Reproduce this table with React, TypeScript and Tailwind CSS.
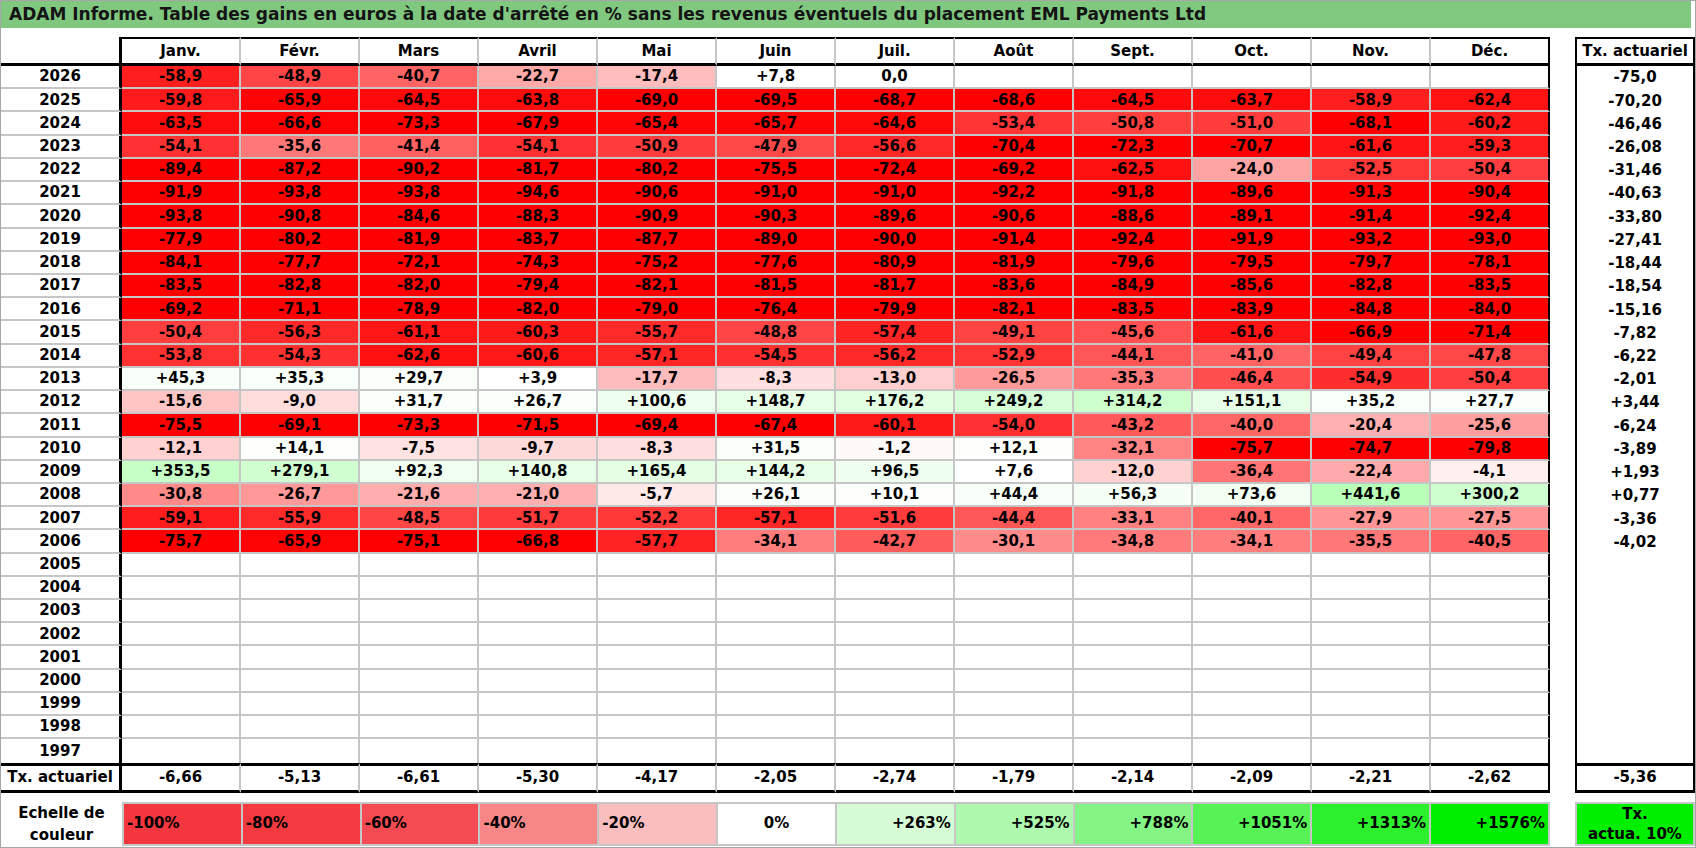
import React from 'react';

const months = ['Janv.', 'Févr.', 'Mars', 'Avril', 'Mai', 'Juin', 'Juil.', 'Août', 'Sept.', 'Oct.', 'Nov.', 'Déc.'];

// year, 12 monthly values (blank = ''), tx actuariel
const rows: [string, string[], string][] = [
  ['2026', ['-58,9', '-48,9', '-40,7', '-22,7', '-17,4', '+7,8', '0,0', '', '', '', '', ''], '-75,0'],
  ['2025', ['-59,8', '-65,9', '-64,5', '-63,8', '-69,0', '-69,5', '-68,7', '-68,6', '-64,5', '-63,7', '-58,9', '-62,4'], '-70,20'],
  ['2024', ['-63,5', '-66,6', '-73,3', '-67,9', '-65,4', '-65,7', '-64,6', '-53,4', '-50,8', '-51,0', '-68,1', '-60,2'], '-46,46'],
  ['2023', ['-54,1', '-35,6', '-41,4', '-54,1', '-50,9', '-47,9', '-56,6', '-70,4', '-72,3', '-70,7', '-61,6', '-59,3'], '-26,08'],
  ['2022', ['-89,4', '-87,2', '-90,2', '-81,7', '-80,2', '-75,5', '-72,4', '-69,2', '-62,5', '-24,0', '-52,5', '-50,4'], '-31,46'],
  ['2021', ['-91,9', '-93,8', '-93,8', '-94,6', '-90,6', '-91,0', '-91,0', '-92,2', '-91,8', '-89,6', '-91,3', '-90,4'], '-40,63'],
  ['2020', ['-93,8', '-90,8', '-84,6', '-88,3', '-90,9', '-90,3', '-89,6', '-90,6', '-88,6', '-89,1', '-91,4', '-92,4'], '-33,80'],
  ['2019', ['-77,9', '-80,2', '-81,9', '-83,7', '-87,7', '-89,0', '-90,0', '-91,4', '-92,4', '-91,9', '-93,2', '-93,0'], '-27,41'],
  ['2018', ['-84,1', '-77,7', '-72,1', '-74,3', '-75,2', '-77,6', '-80,9', '-81,9', '-79,6', '-79,5', '-79,7', '-78,1'], '-18,44'],
  ['2017', ['-83,5', '-82,8', '-82,0', '-79,4', '-82,1', '-81,5', '-81,7', '-83,6', '-84,9', '-85,6', '-82,8', '-83,5'], '-18,54'],
  ['2016', ['-69,2', '-71,1', '-78,9', '-82,0', '-79,0', '-76,4', '-79,9', '-82,1', '-83,5', '-83,9', '-84,8', '-84,0'], '-15,16'],
  ['2015', ['-50,4', '-56,3', '-61,1', '-60,3', '-55,7', '-48,8', '-57,4', '-49,1', '-45,6', '-61,6', '-66,9', '-71,4'], '-7,82'],
  ['2014', ['-53,8', '-54,3', '-62,6', '-60,6', '-57,1', '-54,5', '-56,2', '-52,9', '-44,1', '-41,0', '-49,4', '-47,8'], '-6,22'],
  ['2013', ['+45,3', '+35,3', '+29,7', '+3,9', '-17,7', '-8,3', '-13,0', '-26,5', '-35,3', '-46,4', '-54,9', '-50,4'], '-2,01'],
  ['2012', ['-15,6', '-9,0', '+31,7', '+26,7', '+100,6', '+148,7', '+176,2', '+249,2', '+314,2', '+151,1', '+35,2', '+27,7'], '+3,44'],
  ['2011', ['-75,5', '-69,1', '-73,3', '-71,5', '-69,4', '-67,4', '-60,1', '-54,0', '-43,2', '-40,0', '-20,4', '-25,6'], '-6,24'],
  ['2010', ['-12,1', '+14,1', '-7,5', '-9,7', '-8,3', '+31,5', '-1,2', '+12,1', '-32,1', '-75,7', '-74,7', '-79,8'], '-3,89'],
  ['2009', ['+353,5', '+279,1', '+92,3', '+140,8', '+165,4', '+144,2', '+96,5', '+7,6', '-12,0', '-36,4', '-22,4', '-4,1'], '+1,93'],
  ['2008', ['-30,8', '-26,7', '-21,6', '-21,0', '-5,7', '+26,1', '+10,1', '+44,4', '+56,3', '+73,6', '+441,6', '+300,2'], '+0,77'],
  ['2007', ['-59,1', '-55,9', '-48,5', '-51,7', '-52,2', '-57,1', '-51,6', '-44,4', '-33,1', '-40,1', '-27,9', '-27,5'], '-3,36'],
  ['2006', ['-75,7', '-65,9', '-75,1', '-66,8', '-57,7', '-34,1', '-42,7', '-30,1', '-34,8', '-34,1', '-35,5', '-40,5'], '-4,02'],
  ...['2005', '2004', '2003', '2002', '2001', '2000', '1999', '1998', '1997'].map(
    (y) => [y, Array(12).fill(''), ''] as [string, string[], string]
  ),
];

const totals = ['-6,66', '-5,13', '-6,61', '-5,30', '-4,17', '-2,05', '-2,74', '-1,79', '-2,14', '-2,09', '-2,21', '-2,62'];

const legend = [
  { label: '-100%', bg: 'bg-[#f4373e]', align: 'justify-start pl-[3px]' },
  { label: '-80%', bg: 'bg-[#f4393f]', align: 'justify-start pl-[3px]' },
  { label: '-60%', bg: 'bg-[#f44a51]', align: 'justify-start pl-[3px]' },
  { label: '-40%', bg: 'bg-[#f78686]', align: 'justify-start pl-[3px]' },
  { label: '-20%', bg: 'bg-[#fbbebe]', align: 'justify-start pl-[3px]' },
  { label: '0%', bg: 'bg-white', align: 'justify-center' },
  { label: '+263%', bg: 'bg-[#d6fcd6]', align: 'justify-end pr-[3px]' },
  { label: '+525%', bg: 'bg-[#aef9ae]', align: 'justify-end pr-[3px]' },
  { label: '+788%', bg: 'bg-[#84f584]', align: 'justify-end pr-[3px]' },
  { label: '+1051%', bg: 'bg-[#56f256]', align: 'justify-end pr-[3px]' },
  { label: '+1313%', bg: 'bg-[#2cf02c]', align: 'justify-end pr-[3px]' },
  { label: '+1576%', bg: 'bg-[#00ee00]', align: 'justify-end pr-[3px]' },
];

// colour scale of the sheet: white at 0, full red near -67%, full green at +1576%
function cellBg(s: string) {
  if (!s) return '#ffffff';
  const v = parseFloat(s.replace(',', '.'));
  if (v < 0) {
    const c = Math.round(255 * (1 - Math.min(1, -v / 67)));
    return `rgb(255,${c},${c})`;
  }
  const c = Math.round(255 * (1 - Math.min(1, v / 1576)));
  return `rgb(${c},255,${c})`;
}

export default function App() {
  return (
    <div className="w-[1696px] h-[848px] bg-white border border-[#a6a6a6] text-black font-bold overflow-hidden font-['DejaVu_Sans',sans-serif]">
      {/* Title */}
      <div className="h-[27px] mr-[4px] bg-[#80c880] pl-[8px] flex items-center text-[17px] text-[#141414]">
        ADAM Informe. Table des gains en euros à la date d'arrêté en % sans les revenus éventuels du placement EML Payments Ltd
      </div>

      <div className="flex mt-[9px] text-[15px]">
        {/* Main table */}
        <div className="w-[1549px]">
          <div className="flex h-[29px]">
            <div className="w-[121px] border-r-[3px] border-b-[3px] border-black" />
            {months.map((m, i) => (
              <div
                key={m}
                className={`w-[119px] flex items-center justify-center border-t-2 border-b-[3px] border-r-2 border-t-black border-b-black ${i === 11 ? 'border-r-black' : 'border-r-[#c6c6c6]'}`}
              >
                {m}
              </div>
            ))}
          </div>

          {rows.map(([year, vals], ri) => {
            const last = ri === rows.length - 1;
            return (
              <div key={year} className="flex h-[23.23px]">
                <div className={`w-[121px] flex items-center justify-center border-r-[3px] border-r-black border-b-[#c6c6c6] ${last ? '' : 'border-b-2'}`}>
                  {year}
                </div>
                {vals.map((v, i) => (
                  <div
                    key={i}
                    style={{ backgroundColor: cellBg(v) }}
                    className={`w-[119px] flex items-center justify-center border-r-2 border-b-[#c6c6c6] ${last ? '' : 'border-b-2'} ${i === 11 ? 'border-r-black' : 'border-r-[#c6c6c6]'}`}
                  >
                    {v}
                  </div>
                ))}
              </div>
            );
          })}

          <div className="flex h-[30px]">
            <div className="w-[121px] flex items-center justify-center border-t-[3px] border-b-[3px] border-r-[3px] border-black whitespace-nowrap">
              Tx. actuariel
            </div>
            {totals.map((t, i) => (
              <div
                key={i}
                className={`w-[119px] flex items-center justify-center border-t-[3px] border-b-[3px] border-r-2 border-t-black border-b-black ${i === 11 ? 'border-r-black' : 'border-r-[#c6c6c6]'}`}
              >
                {t}
              </div>
            ))}
          </div>
        </div>

        {/* Tx. actuariel column */}
        <div className="w-[120px] ml-[25px] border-x-2 border-black">
          <div className="h-[29px] flex items-center justify-center border-t-2 border-b-[3px] border-black whitespace-nowrap">
            Tx. actuariel
          </div>
          {rows.map(([year, , tx]) => (
            <div key={year} className="h-[23.23px] flex items-center justify-center">
              {tx}
            </div>
          ))}
          <div className="h-[30px] flex items-center justify-center border-t-[3px] border-b-[3px] border-black">
            -5,36
          </div>
        </div>
      </div>

      {/* Colour legend */}
      <div className="flex mt-[9px] h-[44px] text-[15px]">
        <div className="w-[121px] flex items-center justify-center text-center leading-[22px]">
          Echelle de
          <br />
          couleur
        </div>
        <div className="flex w-[1428px] border-y-2 border-l-2 border-[#c6c6c6]">
          {legend.map((l) => (
            <div key={l.label} className={`w-[119px] flex items-center border-r-2 border-[#c6c6c6] ${l.bg} ${l.align}`}>
              {l.label}
            </div>
          ))}
        </div>
        <div className="w-[120px] ml-[25px] bg-[#00ee00] border-2 border-[#c6c6c6] flex items-center justify-center text-center leading-[20px]">
          Tx.
          <br />
          actua. 10%
        </div>
      </div>
    </div>
  );
}
